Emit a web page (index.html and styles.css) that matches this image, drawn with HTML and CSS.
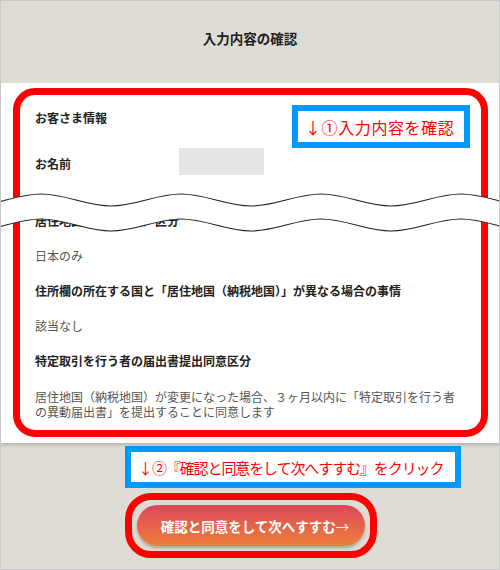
FILE: index.html
```html
<!DOCTYPE html>
<html lang="ja">
<head>
<meta charset="utf-8">
<title>入力内容の確認</title>
<link rel="stylesheet" href="styles.css">
</head>
<body>
<div class="frame">
  <header class="header">入力内容の確認</header>
  <section class="panel">
    <div class="redbox">
      <div class="callout callout-1">↓①入力内容を確認</div>
      <div class="label first">お客さま情報</div>
      <div class="name-row">
        <div class="label">お名前</div>
        <div class="masked"></div>
      </div>
      <div class="label hidden-label">居住地国（納税地国）区分</div>
      <div class="value">日本のみ</div>
      <div class="label gap">住所欄の所在する国と「居住地国（納税地国）」が異なる場合の事情</div>
      <div class="value">該当なし</div>
      <div class="label gap">特定取引を行う者の届出書提出同意区分</div>
      <div class="para">居住地国（納税地国）が変更になった場合、３ヶ月以内に「特定取引を行う者の異動届出書」を提出することに同意します</div>
    </div>
  </section>
  <section class="footer">
    <div class="callout callout-2">↓②『確認と同意をして次へすすむ』をクリック</div>
    <div class="btn-ring">
      <div class="btn">確認と同意をして次へすすむ<span class="arrow">→</span></div>
    </div>
  </section>
  <svg class="wave" width="502" height="55" viewBox="-1 0 502 55" xmlns="http://www.w3.org/2000/svg">
    <path fill="#fff" d="M-30,21 C-5,21 15,9 40,9 S85,21 110,21 S155,9 180,9 S225,21 250,21 S295,9 320,9 S365,21 390,21 S435,9 460,9 S505,21 530,21 L530,46 C505,46 485,34 460,34 S415,46 390,46 S345,34 320,34 S275,46 250,46 S205,34 180,34 S135,46 110,46 S65,34 40,34 S-5,46 -30,46 Z"/>
    <path fill="none" stroke="#222" stroke-width="1.2" d="M-30,21 C-5,21 15,9 40,9 S85,21 110,21 S155,9 180,9 S225,21 250,21 S295,9 320,9 S365,21 390,21 S435,9 460,9 S505,21 530,21"/>
    <path fill="none" stroke="#222" stroke-width="1.2" d="M-30,46 C-5,46 15,34 40,34 S85,46 110,46 S155,34 180,34 S225,46 250,46 S295,34 320,34 S365,46 390,46 S435,34 460,34 S505,46 530,46"/>
  </svg>
</div>
</body>
</html>
```

FILE: styles.css
```css
* { box-sizing: border-box; }
html, body { margin: 0; padding: 0; }
body {
  font-family: "Noto Sans CJK JP", "Noto Sans", "Liberation Sans", sans-serif;
  color: #222;
}
.frame {
  position: relative;
  width: 500px;
  height: 570px;
  border: 1px solid #c8c8c8;
  background: #dfdcd5;
  overflow: hidden;
}
.header {
  height: 82px;
  padding-top: 27px;
  text-align: center;
  font-size: 13.5px;
  line-height: 20px;
  font-weight: 700;
  color: #222;
}
.panel {
  background: #fff;
  padding: 5px 11px 6px 12px;
  border-bottom: 1px solid #bdbbb6;
  box-shadow: 0 2px 2px rgba(0, 0, 0, 0.12);
  position: relative;
}
.redbox {
  position: relative;
  height: 349px;
  border: 7px solid #ff0000;
  border-radius: 22px;
  padding: 15px 20px 0 15px;
  display: flex;
  flex-direction: column;
}
.label {
  font-size: 12px;
  line-height: 15px;
  font-weight: 700;
  color: #222;
}
.first { margin-bottom: 23px; }
.name-row {
  display: grid;
  grid-template-columns: 144px 85px;
  align-items: center;
  height: 27px;
}
.name-row .label { padding-top: 4px; }
.masked {
  height: 27px;
  background: #e5e5e5;
}
.hidden-label { margin-top: 38px; }
.value {
  margin-top: 20px;
  font-size: 12px;
  line-height: 15px;
  color: #555;
}
.gap { margin-top: 20px; }
.para {
  margin-top: 21px;
  font-size: 12px;
  line-height: 15px;
  color: #555;
}
.callout {
  border: 6px solid #0099ff;
  background: #fff;
  color: #ff0000;
  font-size: 16px;
  white-space: nowrap;
  display: flex;
  align-items: center;
}
.callout-1 {
  position: absolute;
  left: 272px;
  top: 10px;
  width: 178px;
  height: 43px;
  padding-left: 7px;
  letter-spacing: 0.6px;
}
.footer {
  padding: 2px 0 0 124px;
}
.callout-2 {
  width: 336px;
  height: 42px;
  padding-left: 7px;
  font-size: 15px;
  letter-spacing: -1.1px;
}
.btn-ring {
  margin-top: 5px;
  width: 252px;
  height: 65px;
  border: 7px solid #ff0000;
  border-radius: 26px;
  padding: 5px;
}
.btn {
  height: 41px;
  border-radius: 21px;
  background: linear-gradient(to bottom, #d9485a, #ef7f3a);
  box-shadow: 0 2px 3px rgba(0, 0, 0, 0.25);
  color: #fff;
  font-weight: 700;
  font-size: 13.5px;
  display: flex;
  align-items: center;
  justify-content: center;
  padding-left: 8px;
}
.arrow {
  font-weight: 400;
  opacity: 0.85;
}
.wave {
  position: absolute;
  left: -1px;
  top: 184px;
}
```
